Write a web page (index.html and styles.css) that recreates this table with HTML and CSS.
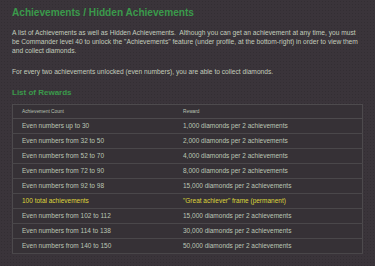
FILE: index.html
```html
<!DOCTYPE html>
<html>
<head>
<meta charset="utf-8">
<link rel="stylesheet" href="styles.css">
</head>
<body>
<div class="page">
  <h1 class="title">Achievements / Hidden Achievements</h1>
  <p class="text">A list of Achievements as well as Hidden Achievements.&nbsp; Although you can get an achievement at any time, you must be Commander level 40 to unlock the "Achievements" feature (under profile, at the bottom-right) in order to view them and collect diamonds.</p>
  <p class="text">For every two achievements unlocked (even numbers), you are able to collect diamonds.</p>
  <h2 class="subtitle">List of Rewards</h2>
  <table class="rewards">
    <thead>
      <tr><th class="c1">Achievement Count</th><th>Reward</th></tr>
    </thead>
    <tbody>
      <tr><td>Even numbers up to 30</td><td>1,000 diamonds per 2 achievements</td></tr>
      <tr><td>Even numbers from 32 to 50</td><td>2,000 diamonds per 2 achievements</td></tr>
      <tr><td>Even numbers from 52 to 70</td><td>4,000 diamonds per 2 achievements</td></tr>
      <tr><td>Even numbers from 72 to 90</td><td>8,000 diamonds per 2 achievements</td></tr>
      <tr><td>Even numbers from 92 to 98</td><td>15,000 diamonds per 2 achievements</td></tr>
      <tr class="highlight"><td>100 total achievements</td><td>"Great achiever" frame (permanent)</td></tr>
      <tr><td>Even numbers from 102 to 112</td><td>15,000 diamonds per 2 achievements</td></tr>
      <tr><td>Even numbers from 114 to 138</td><td>30,000 diamonds per 2 achievements</td></tr>
      <tr><td>Even numbers from 140 to 150</td><td>50,000 diamonds per 2 achievements</td></tr>
    </tbody>
  </table>
</div>
</body>
</html>
```

FILE: styles.css
```css
html, body {
  margin: 0;
  padding: 0;
}
body {
  background-color: #3a343a;
  background-image: radial-gradient(circle, rgba(0,0,0,0.12) 0.6px, transparent 0.8px);
  background-size: 3px 3px;
  font-family: "Liberation Sans", Arial, sans-serif;
  color: #c3ccbd;
  width: 375px;
  height: 266px;
  overflow: hidden;
}
.page {
  padding: 6px 12px 0 12px;
}
.title {
  margin: 0;
  font-size: 10.1px;
  line-height: 14px;
  font-weight: bold;
  color: #3a9a4b;
}
.text {
  margin: 7.5px 0 0 0;
  max-width: 346px;
  font-size: 6.67px;
  line-height: 9px;
}
.text + .text {
  margin-top: 12px;
}
.subtitle {
  margin: 11px 0 0 0;
  font-size: 8px;
  line-height: 11px;
  font-weight: bold;
  color: #3a9a4b;
}
.rewards {
  margin-top: 6.5px;
  width: 351px;
  border-collapse: collapse;
  border: 1px solid #4d4a4d;
  background: #363136;
}
.rewards th {
  text-align: left;
  font-weight: normal;
  font-size: 4.8px;
  height: 12.5px;
  padding: 0 0 0 9px;
  color: #b9c1b4;
  border-bottom: 1px solid #4d4a4d;
}
.rewards th.c1,
.rewards td:first-child {
  width: 152px;
}
.rewards td {
  font-size: 6.5px;
  height: 14px;
  padding: 0 0 0 9px;
  color: #bcc6b5;
  border-bottom: 1px solid #4a474a;
}
.rewards tr.highlight td {
  color: #ddd43a;
}
```
